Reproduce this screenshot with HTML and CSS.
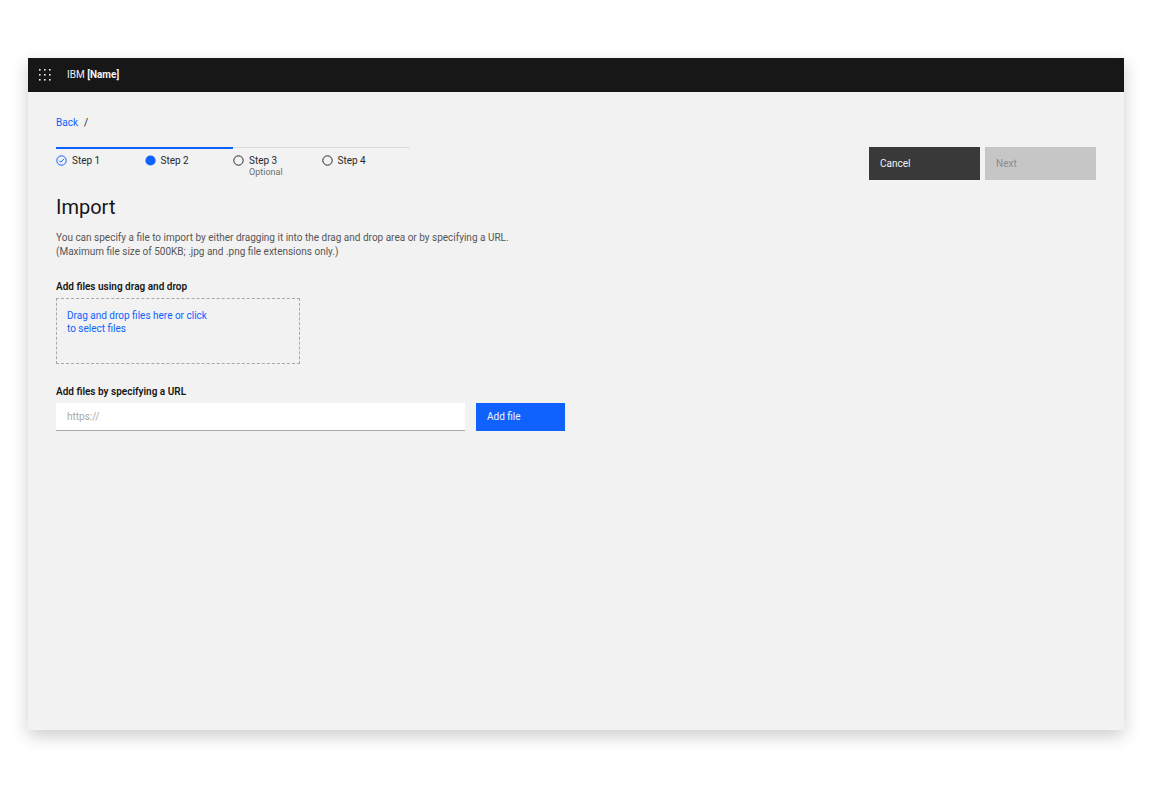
FILE: index.html
```html
<!DOCTYPE html>
<html lang="en">
<head>
    <meta charset="UTF-8">
    <meta name="viewport" content="width=device-width, initial-scale=1.0">
    <title>Import</title>
    <link rel="stylesheet" href="styles.css">
</head>
<body>

<div class="window">
    <header class="header">
        <button type="button" class="menu-button" aria-label="Switch application">
            <svg width="12" height="12" viewBox="0 0 12 12" fill="#f3f3f3">
                <rect x="0" y="0" width="1.6" height="1.6"/>
                <rect x="5" y="0" width="1.6" height="1.6"/>
                <rect x="10" y="0" width="1.6" height="1.6"/>
                <rect x="0" y="5" width="1.6" height="1.6"/>
                <rect x="5" y="5" width="1.6" height="1.6"/>
                <rect x="10" y="5" width="1.6" height="1.6"/>
                <rect x="0" y="10" width="1.6" height="1.6"/>
                <rect x="5" y="10" width="1.6" height="1.6"/>
                <rect x="10" y="10" width="1.6" height="1.6"/>
            </svg>
        </button>
        <span class="product">IBM <strong>[Name]</strong></span>
    </header>

    <main class="content">
        <nav class="breadcrumb">
            <a href="#">Back</a>
            <span>/</span>
        </nav>

        <div class="toolbar">
            <ol class="steps">
                <li class="step done">
                    <svg width="11" height="11" viewBox="0 0 11 11" fill="none" stroke="#0f62fe">
                        <circle cx="5.5" cy="5.5" r="4.7"/>
                        <path d="M3.3 5.7L4.8 7.2L7.8 4"/>
                    </svg>
                    <span class="step-name">Step 1</span>
                </li>
                <li class="step done" aria-current="step">
                    <svg width="11" height="11" viewBox="0 0 11 11" fill="#0f62fe">
                        <circle cx="5.5" cy="5.5" r="5.1"/>
                    </svg>
                    <span class="step-name">Step 2</span>
                </li>
                <li class="step">
                    <svg width="11" height="11" viewBox="0 0 11 11" fill="none" stroke="#282828">
                        <circle cx="5.5" cy="5.5" r="4.7"/>
                    </svg>
                    <span class="step-name">Step 3<small>Optional</small></span>
                </li>
                <li class="step">
                    <svg width="11" height="11" viewBox="0 0 11 11" fill="none" stroke="#282828">
                        <circle cx="5.5" cy="5.5" r="4.7"/>
                    </svg>
                    <span class="step-name">Step 4</span>
                </li>
            </ol>
            <div class="actions">
                <button type="button" class="btn btn-secondary">Cancel</button>
                <button type="submit" form="importForm" class="btn btn-disabled" disabled>Next</button>
            </div>
        </div>

        <h1>Import</h1>
        <p class="intro">You can specify a file to import by either dragging it into the drag and drop area or by specifying a URL.<br>(Maximum file size of 500KB; .jpg and .png file extensions only.)</p>

        <form id="importForm">
            <h2 class="label">Add files using drag and drop</h2>
            <button type="button" class="dropzone">Drag and drop files here or click<br>to select files</button>

            <label class="label" for="url">Add files by specifying a URL</label>
            <div class="url-row">
                <input type="url" id="url" name="url" placeholder="https://">
                <button type="button" class="btn btn-primary">Add file</button>
            </div>
        </form>
    </main>
</div>

</body>
</html>
```
FILE: styles.css
```css
* {
    box-sizing: border-box;
}

body {
    display: flex;
    min-height: 100vh;
    margin: 0;
    padding: 58px 28px;
    background: #fff;
    color: #171717;
    font-family: Roboto, "Noto Sans", sans-serif;
    font-size: 10px;
    line-height: 14px;
}

button, input {
    font: inherit;
    border: 0;
    border-radius: 0;
}

button {
    cursor: pointer;
}

/* Application window */
.window {
    flex: 1;
    background: #f2f2f2;
    box-shadow: 0 6px 16px rgba(0, 0, 0, 0.2);
}

.header {
    display: flex;
    align-items: center;
    height: 34px;
    background: #171717;
    color: #f3f3f3;
}

.menu-button {
    display: flex;
    padding: 11px;
    margin-right: 5px;
    background: none;
}

.content {
    padding: 24px 28px;
}

/* Breadcrumb */
.breadcrumb {
    display: flex;
    gap: 6px;
    margin-bottom: 17px;
}

.breadcrumb a {
    color: #0f62fe;
    text-decoration: none;
}

/* Progress steps and actions */
.toolbar {
    display: flex;
    justify-content: space-between;
    align-items: flex-start;
    margin-bottom: 14px;
}

.steps {
    display: grid;
    grid-template-columns: repeat(4, 1fr);
    width: 354px;
    margin: 0;
    padding: 0;
    list-style: none;
}

.step {
    display: flex;
    gap: 5px;
    padding-top: 6px;
    border-top: 1px solid #dcdcdc;
    color: #282828;
}

.step.done {
    padding-top: 5px;
    border-top: 2px solid #0f62fe;
}

.step svg {
    margin-top: 1px;
}

.step small {
    display: block;
    color: #6f6f6f;
    font-size: 9px;
    line-height: 9px;
}

.actions {
    display: flex;
    gap: 5px;
}

.btn {
    padding: 0 11px;
    color: #f3f3f3;
    text-align: left;
}

.actions .btn {
    width: 111px;
    height: 33px;
}

.btn-primary {
    width: 89px;
    background: #0f62fe;
}

.btn-secondary {
    background: #393939;
}

.btn-disabled {
    background: #c6c6c6;
    color: #8c8c8c;
    cursor: not-allowed;
}

/* Import form */
h1 {
    margin: 0 0 11px;
    font-size: 20px;
    font-weight: 400;
    line-height: 26px;
}

.intro {
    margin: 0 0 21px;
    color: #565656;
}

.label {
    display: block;
    margin: 0 0 4px;
    font-size: 10px;
    font-weight: 600;
}

.dropzone {
    display: flex;
    width: 244px;
    height: 66px;
    margin-bottom: 21px;
    padding: 10px;
    border: 1px dashed #a8a8a8;
    background: none;
    color: #0f62fe;
    line-height: 13px;
    text-align: left;
}

.url-row {
    display: flex;
    gap: 11px;
    height: 28px;
}

.url-row input {
    width: 409px;
    padding: 0 11px;
    border-bottom: 1px solid #a8a8a8;
    background: #fff;
    color: #171717;
}

.url-row input::placeholder {
    color: #a8a8a8;
}
```
